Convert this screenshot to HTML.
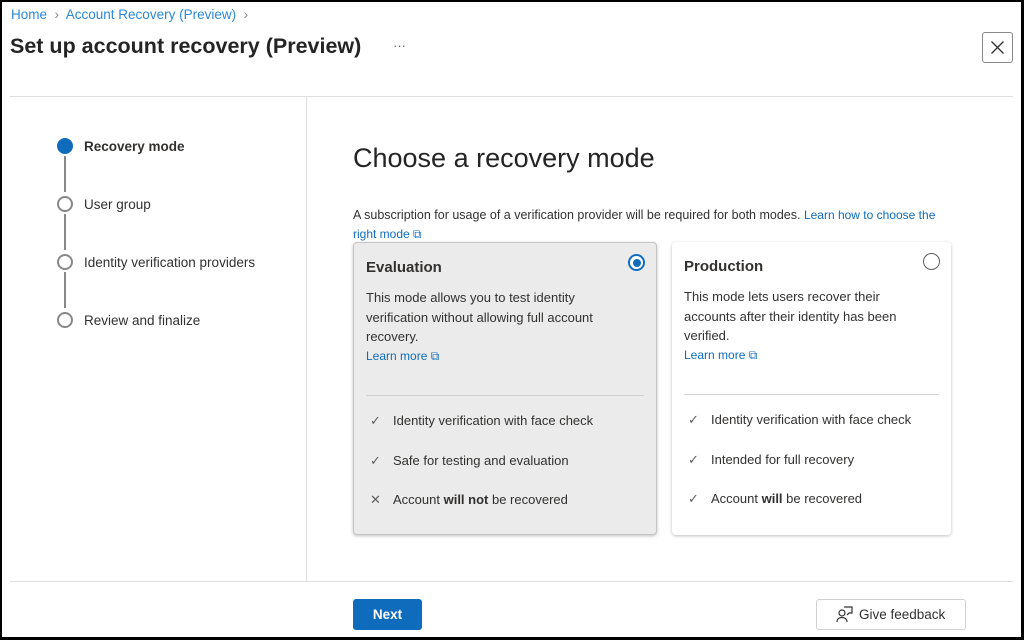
<!DOCTYPE html>
<html><head><meta charset="utf-8"><style>
*{box-sizing:border-box;margin:0;padding:0}
body{width:1024px;height:640px;overflow:hidden;background:#fff;font-family:"Liberation Sans",sans-serif;color:#323130;position:relative}
.frame{position:absolute;left:0;top:0;width:1024px;height:640px;border:2px solid #000;border-right-width:3px;border-bottom-width:3px}
.a{position:absolute}
.link{color:#0f6cbd}
.step{position:absolute;left:57px;font-size:13.5px}
.step .c{position:absolute;left:0;top:0;width:16px;height:16px;border:2px solid #8a8886;border-radius:50%;background:#fff}
.step span{position:absolute;left:27px;top:1px;white-space:nowrap}
.vl{position:absolute;left:64px;width:1.5px;background:#8a8886;height:36px}
.card{position:absolute;top:242px;height:293px;border-radius:4px;box-shadow:0 1px 3px rgba(0,0,0,.25);padding:0 12px}
.card h3{position:absolute;top:16px;left:12px;font-size:15px;font-weight:bold;color:#323130}
.card p{position:absolute;top:45px;left:12px;font-size:13px;line-height:19.5px}
.card .lm{position:absolute;top:106px;left:12px;font-size:12px;color:#0f6cbd}
.card hr{position:absolute;top:152px;left:12px;right:12px;border:0;border-top:1px solid #d1d1d1}
.card .it{position:absolute;left:16px;font-size:13px;white-space:nowrap}
.card .it i{font-style:normal;display:inline-block;width:23px;color:#605e5c}
.radio{position:absolute;top:11px;width:17px;height:17px;border-radius:50%;border:1px solid #605e5c;background:#fff}
</style></head><body>
<div class="a link" style="left:11px;top:7px;font-size:13.5px;color:#2b88d8">Home <span style="color:#8a8886">&nbsp;›&nbsp;</span> Account Recovery (Preview) <span style="color:#8a8886">&nbsp;›</span></div>
<div class="a" style="left:10px;top:34px;font-size:21.5px;font-weight:bold;color:#242424">Set up account recovery (Preview)</div>
<div class="a" style="left:393px;top:38px;font-size:13px;color:#605e5c">···</div>
<div class="a" style="left:982px;top:32px;width:31px;height:31px;border:1px solid #8a8886;border-radius:3px">
<svg width="29" height="29" viewBox="0 0 29 29" stroke="#323130" stroke-width="1.3"><path d="M8.5 8.5l12 12M20.5 8.5l-12 12"/></svg></div>
<div class="a" style="left:10px;top:96px;width:1003px;border-top:1px solid #e1dfdd"></div>
<div class="a" style="left:306px;top:96px;height:485px;border-left:1px solid #e1dfdd"></div>
<div class="a" style="left:10px;top:581px;width:1003px;border-top:1px solid #e1dfdd"></div>

<div class="step" style="top:138px"><div class="c" style="border-color:#0f6cbd;background:#0f6cbd"></div><span style="font-weight:bold">Recovery mode</span></div>
<div class="vl" style="top:156px"></div>
<div class="step" style="top:196px"><div class="c"></div><span>User group</span></div>
<div class="vl" style="top:214px"></div>
<div class="step" style="top:254px"><div class="c"></div><span>Identity verification providers</span></div>
<div class="vl" style="top:272px"></div>
<div class="step" style="top:312px"><div class="c"></div><span>Review and finalize</span></div>

<div class="a" style="left:353px;top:143px;font-size:27px;color:#242424">Choose a recovery mode</div>
<div class="a" style="left:353px;top:206px;width:605px;font-size:12.5px;line-height:19px">A subscription for usage of a verification provider will be required for both modes. <span class="link" style="font-size:12px">Learn how to choose the right mode ⧉</span></div>

<div class="card" style="left:353px;width:304px;background:#ebebeb;border:1px solid #c8c6c4">
<h3>Evaluation</h3><div class="radio" style="right:11px;border:2px solid #0f6cbd;background:#fff"><div style="position:absolute;left:2.5px;top:2.5px;width:8px;height:8px;border-radius:50%;background:#0f6cbd"></div></div>
<p style="width:250px">This mode allows you to test identity verification without allowing full account recovery.</p>
<div class="lm">Learn more ⧉</div><hr>
<div class="it" style="top:170px"><i>✓</i>Identity verification with face check</div>
<div class="it" style="top:210px"><i>✓</i>Safe for testing and evaluation</div>
<div class="it" style="top:249px"><i>✕</i>Account <b>will not</b> be recovered</div>
</div>
<div class="card" style="left:672px;width:279px;background:#fff">
<h3>Production</h3><div class="radio" style="right:11px"></div>
<p style="width:228px">This mode lets users recover their accounts after their identity has been verified.</p>
<div class="lm">Learn more ⧉</div><hr>
<div class="it" style="top:170px"><i>✓</i>Identity verification with face check</div>
<div class="it" style="top:210px"><i>✓</i>Intended for full recovery</div>
<div class="it" style="top:249px"><i>✓</i>Account <b>will</b> be recovered</div>
</div>

<div class="a" style="left:353px;top:599px;width:69px;height:31px;background:#0f6cbd;border-radius:3px;color:#fff;font-weight:bold;font-size:13.5px;text-align:center;line-height:31px">Next</div>
<div class="a" style="left:816px;top:599px;width:150px;height:31px;border:1px solid #d1d1d1;border-radius:3px;font-size:13.5px;line-height:29px;padding-left:20px">
<svg width="17" height="17" viewBox="0 0 17 17" style="position:absolute;left:19px;top:6px" fill="none" stroke="#323130" stroke-width="1.2"><circle cx="6" cy="7" r="3"/><path d="M1 16c0-3 2.2-4.5 5-4.5s5 1.5 5 4.5"/><path d="M8 1h8v6h-3l-2 2"/></svg>
<span style="margin-left:22px">Give feedback</span></div>
<div class="frame"></div>
</body></html>
